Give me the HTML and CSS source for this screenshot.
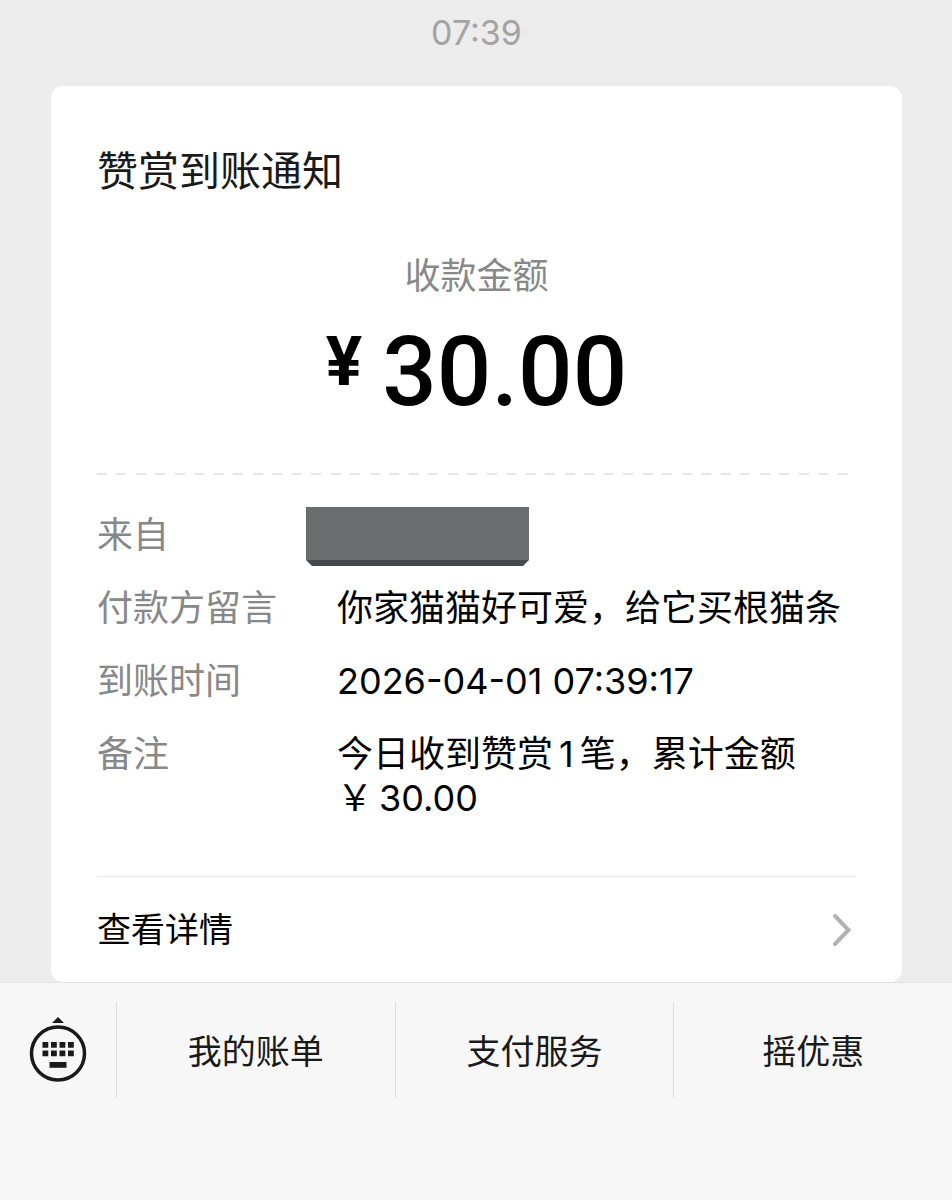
FILE: index.html
```html
<!DOCTYPE html>
<html lang="zh-CN">

<head>
    <meta charset="UTF-8">
    <meta name="viewport" content="width=device-width, initial-scale=1">
    <title>赞赏到账通知</title>
    <link rel="stylesheet" href="styles.css">
</head>

<body>
    <main class="chat">
        <time class="chat-time">07:39</time>

        <article class="card">
            <h1 class="card-title">赞赏到账通知</h1>

            <div class="amount">
                <p class="amount-label">收款金额</p>
                <p class="amount-value"><span class="currency">¥</span><span>30.00</span></p>
            </div>

            <dl class="detail">
                <dt>来自</dt>
                <dd class="payer"><span class="mask"></span></dd>
                <dt>付款方留言</dt>
                <dd>你家猫猫好可爱，给它买根猫条</dd>
                <dt>到账时间</dt>
                <dd>2026-04-01 07:39:17</dd>
                <dt>备注</dt>
                <dd>今日收到赞赏<span class="num">1</span>笔，累计金额<br>￥<span class="num">30.00</span></dd>
            </dl>

            <a class="more" href="#">
                <span>查看详情</span>
                <svg class="arrow" viewBox="0 0 20 34" aria-hidden="true">
                    <path d="M3 3 L16.500 17 L3 31" />
                </svg>
            </a>
        </article>
    </main>

    <nav class="menu">
        <button class="menu-key" type="button" aria-label="键盘">
            <svg viewBox="0 0 58 66" aria-hidden="true">
                <path d="M29 0 L35 6 H23 Z" />
                <circle cx="29" cy="36.500" r="26.500" />
                <path d="M13.500 25h5.800v5.800h-5.800z M22 25h5.800v5.800h-5.800z M30.500 25h5.800v5.800h-5.800z M39 25h5.800v5.800h-5.800z" />
                <path d="M13.500 33.500h5.800v5.800h-5.800z M22 33.500h5.800v5.800h-5.800z M30.500 33.500h5.800v5.800h-5.800z M39 33.500h5.800v5.800h-5.800z" />
                <path d="M20.500 45h17v5.800h-17z" />
            </svg>
        </button>
        <button class="menu-item" type="button">我的账单</button>
        <button class="menu-item" type="button">支付服务</button>
        <button class="menu-item" type="button">摇优惠</button>
    </nav>
</body>

</html>
```

FILE: styles.css
```css
* {
    margin: 0;
    padding: 0;
    box-sizing: border-box;
}

body {
    display: flex;
    flex-direction: column;
    min-height: 100vh;
    background-color: #ececec;
    color: #000;
    font-family: Inter, "Noto Sans CJK SC", sans-serif;
    font-size: 36px;
    line-height: 44px;
}

/* 消息区 */
.chat {
    padding: 11px 50px 0 51px;
}

.chat-time {
    display: block;
    color: #a3a3a3;
    font-size: 34px;
    text-align: center;
}

.card {
    margin-top: 31px;
    padding: 60px 46px 0;
    border-radius: 12px;
    background-color: #fff;
}

.card-title {
    color: #1a1a1a;
    font-size: 41px;
    font-weight: normal;
    line-height: 50px;
}

/* 金额 */
.amount {
    padding: 58px 0 46px;
    text-align: center;
}

.amount-label {
    color: #888;
}

.amount-value {
    display: flex;
    justify-content: center;
    gap: 20px;
    margin-top: 19px;
    font-family: Roboto, "Noto Sans CJK SC", sans-serif;
    font-size: 96px;
    font-weight: 500;
    line-height: 110px;
}

.currency {
    font-size: 68px;
    font-weight: 700;
    line-height: 90px;
}

/* 明细 */
.detail {
    display: grid;
    grid-template-columns: 240px 1fr;
    row-gap: 29px;
    padding: 40px 0 56px;
    border-bottom: 1px solid #e6e6e6;
    background: repeating-linear-gradient(90deg, #e6e6e6 0 10px, transparent 10px 19px, #e6e6e6 19px 29px, transparent 29px 39px) top / 100% 2px no-repeat;
}

.detail dt {
    color: #888;
}

.num {
    margin: 0 6px;
}

.payer {
    position: relative;
}

.mask {
    position: absolute;
    top: -6px;
    left: -31px;
    width: 223px;
    height: 59px;
    background: linear-gradient(#6b6c6e 53px, #47484b 53px);
    clip-path: polygon(0 0, 100% 0, 100% 53px, 217px 100%, 6px 100%, 0 53px);
}

.more {
    display: flex;
    align-items: center;
    justify-content: space-between;
    height: 105px;
    padding-right: 4px;
    color: #000;
    font-size: 34px;
    text-decoration: none;
}

.arrow {
    width: 20px;
    height: 34px;
    fill: none;
    stroke: #b2b2b2;
    stroke-width: 4;
    stroke-linecap: round;
}

/* 底部菜单 */
.menu {
    display: flex;
    flex: 1;
    align-items: flex-start;
    padding-top: 19px;
    border-top: 1px solid #e2e2e2;
    background-color: #f7f7f7;
}

.menu button {
    height: 96px;
    border: 0;
    background: none;
    color: #1a1a1a;
    font: inherit;
    font-size: 34px;
    cursor: pointer;
}

.menu-key {
    display: flex;
    align-items: center;
    justify-content: center;
    width: 116px;
}

.menu-key svg {
    width: 58px;
    height: 66px;
}

.menu-key circle {
    fill: none;
    stroke: #1a1a1a;
    stroke-width: 3.5;
}

.menu-key path {
    fill: #1a1a1a;
}

.menu .menu-item {
    flex: 1;
    padding-top: 4px;
    border-left: 1px solid #dedede;
}
```
